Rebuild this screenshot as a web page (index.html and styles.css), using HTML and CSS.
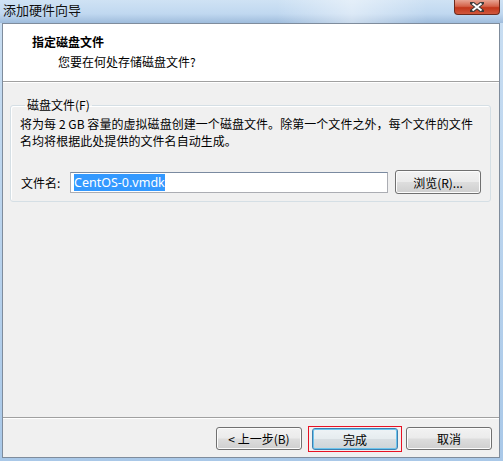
FILE: index.html
```html
<!DOCTYPE html>
<html>
<head>
<meta charset="utf-8">
<link rel="stylesheet" href="styles.css">
</head>
<body>
<div class="frame">
  <div class="titlebar">
    <span class="title">添加硬件向导</span>
    <span class="close">
      <svg width="14" height="10" viewBox="0 0 14 10"><path d="M2 1 L12 9 M12 1 L2 9" stroke="#3b3b3b" stroke-width="4" stroke-linecap="square"/><path d="M2.5 1.5 L11.5 8.5 M11.5 1.5 L2.5 8.5" stroke="#fff" stroke-width="2"/></svg>
    </span>
  </div>
  <div class="client">
    <div class="header">
      <div class="head-title">指定磁盘文件</div>
      <div class="head-sub">您要在何处存储磁盘文件?</div>
    </div>
    <div class="main">
      <fieldset class="group">
        <legend>磁盘文件(F)</legend>
        <p class="desc">将为每 2 GB 容量的虚拟磁盘创建一个磁盘文件。除第一个文件之外，每个文件的文件<br>名均将根据此处提供的文件名自动生成。</p>
        <div class="file-row">
          <span class="file-label">文件名:</span>
          <div class="textbox"><span class="sel">CentOS-0.vmdk</span></div>
          <button class="btn browse">浏览(R)...</button>
        </div>
      </fieldset>
    </div>
    <div class="footer">
      <button class="btn">&lt; 上一步(B)</button>
      <span class="focus-ring"><button class="btn default">完成</button></span>
      <button class="btn">取消</button>
    </div>
  </div>
</div>
</body>
</html>
```

FILE: styles.css
```css
* {
  box-sizing: border-box;
}
body {
  margin: 0;
  width: 503px;
  height: 461px;
  overflow: hidden;
  font-family: "Noto Sans CJK SC", "Liberation Sans", sans-serif;
  font-size: 12px;
  color: #000;
}
/* aero glass frame */
.frame {
  width: 503px;
  height: 461px;
  display: flex;
  flex-direction: column;
  background: linear-gradient(180deg, #c9def2 0%, #bcd5ee 40%, #a9c8e8 100%);
}
.titlebar {
  height: 23px;
  display: flex;
  justify-content: space-between;
  align-items: flex-start;
  background:
    linear-gradient(90deg, rgba(255,255,255,0) 0%, rgba(255,255,255,0) 55%, rgba(255,255,255,0.45) 70%, rgba(255,255,255,0) 85%),
    linear-gradient(180deg, #cfe2f4 0%, #c0d8f0 60%, #9fbcdc 100%);
}
.title {
  padding: 2px 0 0 3px;
  font-size: 13px;
  line-height: 16px;
  color: #111;
}
.close {
  width: 46px;
  height: 15px;
  margin-right: 3px;
  border: 1px solid #6d2a1c;
  border-top: none;
  border-radius: 0 0 4px 4px;
  background: linear-gradient(180deg, #e8a493 0%, #d4634a 45%, #c2361a 55%, #d0583d 100%);
  display: flex;
  align-items: center;
  justify-content: center;
}
.client {
  margin: 0 3px 3px 2px;
  flex: 1;
  display: flex;
  flex-direction: column;
  border: 1px solid #7f8c9c;
  background: #f0f0f0;
}
.header {
  height: 58px;
  background: #fff;
  border-bottom: 1px solid #a0a0a0;
  padding: 9px 0 0 29px;
}
.head-title {
  font-weight: bold;
  line-height: 17px;
}
.head-sub {
  padding: 3px 0 0 26px;
  line-height: 17px;
}
.main {
  flex: 1;
  border-top: 1px solid #fff;
  border-bottom: 1px solid #a0a0a0;
  padding: 14px 8px 0 7px;
}
.group {
  margin: 0;
  padding: 0 8px 7px 9px;
  border: 1px solid #d5dfe5;
  border-radius: 3px;
  box-shadow: inset 1px 1px 0 #fff;
}
.group legend {
  padding: 0 2px;
  margin-left: 5px;
  line-height: 16px;
}
.desc {
  margin: 2px 0 0 0;
  line-height: 17px;
  white-space: nowrap;
  letter-spacing: 0.05px;
}
.file-row {
  display: flex;
  align-items: center;
  margin-top: 21px;
}
.file-label {
  width: 50px;
  padding-left: 1px;
}
.textbox {
  width: 318px;
  height: 21px;
  background: #fff;
  border: 1px solid #abadb3;
  border-top-color: #7a8aa0;
  padding: 1px 0 0 3px;
  line-height: 17px;
  font-family: "Noto Sans", "Liberation Sans", sans-serif;
  font-size: 12.5px;
}
.sel {
  background: #3399ff;
  color: #fff;
}
.btn {
  width: 86px;
  height: 23px;
  padding: 0;
  font-family: "Noto Sans CJK SC", "Liberation Sans", sans-serif;
  font-size: 12px;
  color: #000;
  border: 1px solid #707070;
  border-radius: 3px;
  background: linear-gradient(180deg, #f2f2f2 0%, #ebebeb 48%, #dddddd 52%, #cfcfcf 100%);
  box-shadow: inset 0 0 0 1px #fcfcfc;
}
.browse {
  margin-left: 7px;
  height: 24px;
}
.footer {
  height: 39px;
  border-top: 1px solid #fff;
  display: flex;
  justify-content: flex-end;
  align-items: flex-start;
  padding: 8px 7px 0 0;
}
.focus-ring {
  margin: -1px 4px 0 6px;
  padding: 1px 3px;
  border: 1px solid #e81123;
  display: flex;
}
/* default button: grey face, blue glow border */
.default {
  width: 86px;
  height: 22px;
  border-color: #3c7fb1;
  background: linear-gradient(180deg, #eef3f6 0%, #e6ecef 48%, #d8dee2 52%, #cdd4d8 100%);
  box-shadow: inset 0 0 0 1px #6cc4ec;
}
```
